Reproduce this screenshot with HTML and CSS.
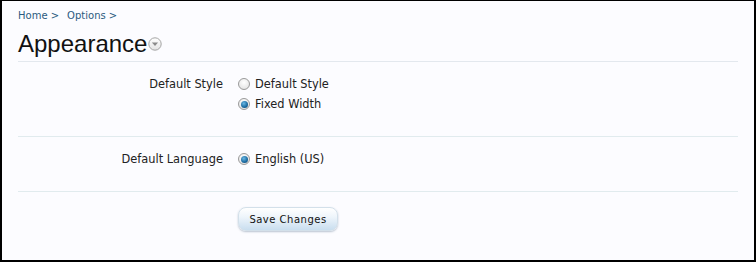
FILE: index.html
```html
<!DOCTYPE html>
<html>
<head>
<meta charset="utf-8">
<link rel="stylesheet" href="styles.css">
</head>
<body>
<div class="frame">
  <nav class="crumbs">
    <a class="crumb" href="#">Home &gt;</a>
    <a class="crumb" href="#">Options &gt;</a>
  </nav>
  <h1 class="title">Appearance<span class="drop"><svg width="14" height="14" viewBox="0 0 14 14"><defs><linearGradient id="g1" x1="0" y1="0" x2="0" y2="1"><stop offset="0" stop-color="#ffffff"/><stop offset="1" stop-color="#e4e4e4"/></linearGradient></defs><circle cx="7" cy="7" r="6.2" fill="url(#g1)" stroke="#a4a4a4" stroke-width="1"/><path d="M3.9 5.6 L10.1 5.6 L7 9 Z" fill="#8a8a8a"/></svg></span></h1>
  <form class="form">
    <div class="row">
      <div class="label">Default Style</div>
      <div class="opts">
        <div class="opt"><span class="radio"></span>Default Style</div>
        <div class="opt"><span class="radio on"></span>Fixed Width</div>
      </div>
    </div>
    <div class="row">
      <div class="label">Default Language</div>
      <div class="opts">
        <div class="opt"><span class="radio on"></span>English (US)</div>
      </div>
    </div>
    <div class="submit">
      <div class="label"></div>
      <div class="opts"><button type="button" class="btn">Save Changes</button></div>
    </div>
  </form>
</div>
</body>
</html>
```
FILE: styles.css
```css
html, body { margin: 0; padding: 0; }
body { width: 756px; height: 262px; overflow: hidden; }
.frame {
  box-sizing: border-box;
  width: 756px;
  height: 262px;
  border: 2px solid #000;
  border-top-width: 1px;
  background: #fcfcff;
  padding: 8px 16px 0 16px;
  font-family: "DejaVu Sans", sans-serif;
  color: #222;
}
.crumbs { display: flex; gap: 8px; height: 14px; font-size: 10px; line-height: 14px; }
.crumb { color: #2b5b80; text-decoration: none; }
.title {
  margin: 6px 0 0 0;
  font-family: "Liberation Sans", Arial, sans-serif;
  font-weight: normal;
  font-size: 24px;
  line-height: 30px;
  height: 30px;
  color: #111;
  display: flex;
  align-items: center;
  padding-bottom: 2px;
  border-bottom: 1px solid #e3e8ee;
}
.drop { display: inline-flex; margin-left: 1px; margin-top: -1px; }
.form { font-size: 11.4px; color: #222; }
.row {
  display: flex;
  padding: 12px 0 22px 0;
  border-bottom: 1px solid #e1ebee;
}
.label { width: 205px; text-align: right; line-height: 20px; flex: none; }
.opts { margin-left: 15px; }
.opt { display: flex; align-items: center; height: 20px; }
.radio {
  box-sizing: border-box;
  width: 12px; height: 12px;
  border-radius: 50%;
  border: 1px solid #9a9a9a;
  background: radial-gradient(circle at 50% 35%, #ffffff 0%, #e8e8e8 70%, #d5d5d5 100%);
  margin-right: 5px;
  position: relative;
  flex: none;
}
.radio.on::after {
  content: "";
  position: absolute;
  left: 1.5px; top: 1.5px;
  width: 7px; height: 7px;
  border-radius: 50%;
  background: radial-gradient(circle at 40% 35%, #6ab8e4 0%, #1f6fa5 55%, #0d3f66 100%);
}
.submit { display: flex; padding-top: 15px; }
.btn {
  box-sizing: border-box;
  width: 100px; height: 24px;
  border: 1px solid #d3e0ea;
  border-radius: 8px;
  background: linear-gradient(to bottom, #ffffff 0%, #eef5fb 40%, #c9deef 100%);
  box-shadow: 0 1px 2px rgba(60,90,120,0.35);
  font-family: "DejaVu Sans", sans-serif;
  font-size: 10px;
  letter-spacing: 0.5px;
  color: #111;
  padding: 0;
}
```
